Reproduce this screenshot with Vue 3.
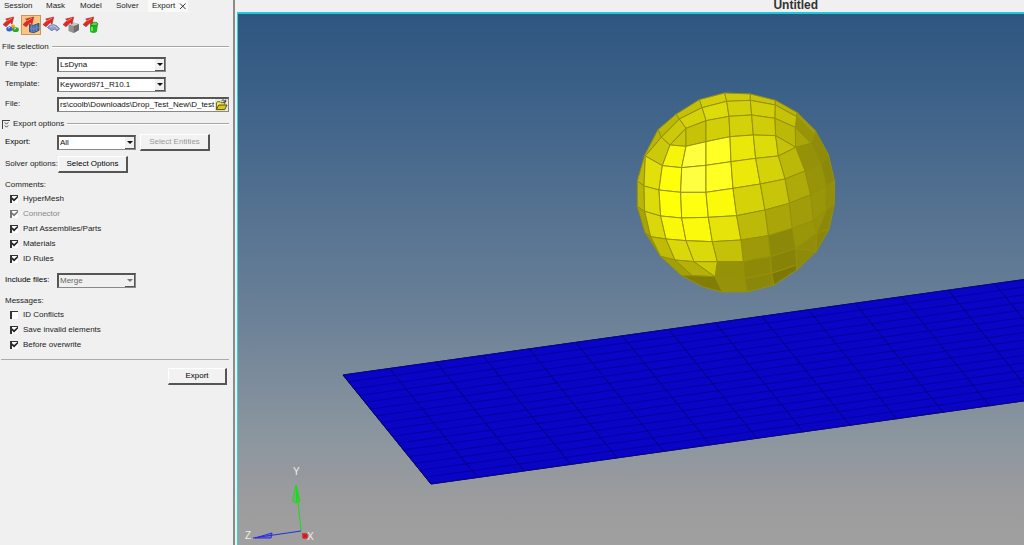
<script setup>
import { ref } from 'vue'

const tabs = ['Session', 'Mask', 'Model', 'Solver']
const tools = ['connectors', 'mesh', 'surface', 'solid', 'database']
const activeTool = ref('mesh')

const fileType = ref('LsDyna')
const template = ref('Keyword971_R10.1')
const filePath = ref('rs\\coolb\\Downloads\\Drop_Test_New\\D_test')
const exportScope = ref('All')
const include = ref('Merge')

const comments = ref([
  { id: 'hypermesh', label: 'HyperMesh', on: true },
  { id: 'connector', label: 'Connector', on: true, disabled: true },
  { id: 'parts', label: 'Part Assemblies/Parts', on: true },
  { id: 'materials', label: 'Materials', on: true },
  { id: 'rules', label: 'ID Rules', on: true }
])
const messages = ref([
  { id: 'conflicts', label: 'ID Conflicts', on: false },
  { id: 'invalid', label: 'Save invalid elements', on: true },
  { id: 'overwrite', label: 'Before overwrite', on: true }
])

// Shaded faces of the ball, three units to a pixel
const faces = [
  ['208,44 284,24 290,49 216,68', '#d2ce0a'],
  ['284,24 361,27 361,46 290,49', '#cfcb08'],
  ['361,27 436,46 436,60 361,46', '#c8c40c'],
  ['436,46 502,83 500,95 436,60', '#b8b40a'],
  ['502,83 556,137 555,150 500,95', '#a09c0a'],
  ['500,95 555,150 543,175 496,127', '#98940a'],
  ['138,88 208,44 216,68 148,102', '#c4c008'],
  ['216,68 290,49 297,94 228,107', '#dedb0a'],
  ['290,49 361,46 365,90 297,94', '#d4d00a'],
  ['361,46 436,60 435,100 365,90', '#d2ce0a'],
  ['436,60 500,95 496,127 435,100', '#c6c20a'],
  ['148,102 216,68 228,107 168,130', '#d6d20a'],
  ['84,134 138,88 148,102 94,157', '#bcb808'],
  ['94,157 148,102 168,130 120,180', '#ccc80a'],
  ['120,180 168,130 168,184', '#cac60a'],
  ['168,130 228,107 228,170 168,184', '#c6c208'],
  ['228,107 297,94 300,155 228,170', '#d2ce08'],
  ['297,94 365,90 370,150 300,155', '#d4d00a'],
  ['365,90 435,100 437,152 370,150', '#d0cc0a'],
  ['435,100 496,127 497,187 437,152', '#bcb80a'],
  ['496,127 543,175 497,187', '#aaa60a'],
  ['497,187 543,175 573,238 525,258', '#959108'],
  ['543,175 555,150 556,137 595,208 573,238', '#908c0a'],
  ['44,211 84,134 94,157 46,213', '#b8b408'],
  ['46,213 94,157 120,180 97,242', '#ccc80a'],
  ['120,180 168,184 155,248 97,242', '#f6f40a'],
  ['168,184 228,170 228,241 155,248', '#ffff40'],
  ['228,170 300,155 303,230 228,241', '#ffff26'],
  ['300,155 370,150 377,220 303,230', '#eae70a'],
  ['370,150 437,152 445,213 377,220', '#dedb0a'],
  ['437,152 497,187 445,213', '#c6c20a'],
  ['445,213 497,187 525,258 465,282', '#bcb80a'],
  ['573,238 595,208 614,290 588,303', '#8c880a'],
  ['22,288 44,211 46,213 42,303', '#bcb808'],
  ['46,213 97,242 87,315 42,303', '#e2df0a'],
  ['97,242 155,248 152,322 87,315', '#ffff0c'],
  ['155,248 228,241 228,322 152,322', '#ffff42'],
  ['228,241 303,230 309,310 228,322', '#ffff24'],
  ['303,230 377,220 391,297 309,310', '#ebe80a'],
  ['377,220 445,213 465,282 391,297', '#d6d20a'],
  ['465,282 525,258 542,329 478,355', '#aeaa0a'],
  ['525,258 573,238 588,303 542,329', '#98940a'],
  ['588,303 614,290 613,357 588,375', '#938f0a'],
  ['22,288 42,303 44,379 22,365', '#b8b408'],
  ['42,303 87,315 92,393 44,379', '#dedb0a'],
  ['87,315 152,322 155,399 92,393', '#ffff0a'],
  ['152,322 228,322 235,397 155,399', '#ffff12'],
  ['228,322 309,310 320,392 235,397', '#fafa0a'],
  ['309,310 391,297 405,375 320,392', '#d6d20a'],
  ['391,297 465,282 478,355 405,375', '#c8c40a'],
  ['405,375 478,355 487,430 415,452', '#aaa608'],
  ['478,355 542,329 550,407 487,430', '#a19d0a'],
  ['542,329 588,303 588,375 550,407', '#9a960a'],
  ['588,375 613,357 597,433 560,445', '#8c880a'],
  ['550,407 588,375 560,445', '#96920a'],
  ['22,365 44,379 62,455 45,442', '#a8a408'],
  ['44,379 92,393 108,462 62,455', '#dad70a'],
  ['92,393 155,399 168,467 108,462', '#f9f80a'],
  ['155,399 235,397 247,470 168,467', '#fcfa0c'],
  ['235,397 320,392 333,465 247,470', '#e6e30a'],
  ['320,392 405,375 415,452 333,465', '#bdb908'],
  ['333,465 415,452 422,515 340,530', '#9d9908'],
  ['415,452 487,430 497,490 422,515', '#8c8809'],
  ['487,430 550,407 560,445 497,490', '#9a960a'],
  ['497,490 560,445 558,500', '#918d0a'],
  ['45,442 62,455 92,514', '#969208'],
  ['62,455 108,462 135,525 92,514', '#bfbb08'],
  ['108,462 168,467 192,530 135,525', '#dad70a'],
  ['168,467 247,470 262,530 192,530', '#dcd90a'],
  ['247,470 333,465 340,530 262,530', '#c5c108'],
  ['262,530 340,530 343,581 255,575', '#969208'],
  ['340,530 422,515 425,565 343,581', '#8e8a08'],
  ['422,515 497,490 500,540 425,565', '#878309'],
  ['497,490 558,500 500,555 500,540', '#8e8a0a'],
  ['560,445 597,433 558,500', '#8a860a'],
  ['92,514 135,525 187,572 155,572', '#a39f08'],
  ['135,525 192,530 255,575 187,572', '#b5b108'],
  ['192,530 262,530 255,575', '#ccc80a'],
  ['155,572 187,572 255,575 277,621 220,606', '#817d06'],
  ['255,575 343,581 352,620 277,621', '#96920a'],
  ['343,581 425,565 432,600 352,620', '#8b870a'],
  ['425,565 500,540 500,555 432,600', '#7c7808']
]

const columns = Array.from({ length: 16 }, (_, i) => {
  const x = 343 + 46.6 * i
  const y = 375 - 6.47 * i
  return { x1: x, y1: y, x2: x + 88, y2: y + 109 }
})
const rows = Array.from({ length: 17 }, (_, i) => {
  const x = 343 + 5.5 * i
  const y = 375 + 6.81 * i
  return { x1: x, y1: y, x2: x + 745.6, y2: y - 104.5 }
})
</script>

<template>
  <div class="app">
    <aside class="panel">
      <nav class="tabs">
        <button v-for="t in tabs" :key="t" class="tab">{{ t }}</button>
        <button class="tab active">Export
          <svg class="close" viewBox="0 0 8 8" aria-hidden="true"><path d="M1 1.5L6.5 7M6.5 1.5L1 7" /></svg>
        </button>
      </nav>

      <div class="toolbar">
        <button
          v-for="t in tools" :key="t" class="tool" :class="{ on: activeTool === t }"
          :aria-label="t" @click="activeTool = t"
        >
          <svg viewBox="0 0 18 18" aria-hidden="true">
            <g v-if="t === 'connectors'">
              <path d="M7 11l5 3" stroke="#777" stroke-width="2" />
              <circle cx="11" cy="10.5" r="2.1" fill="#e6a51c" />
              <ellipse cx="7.3" cy="13" rx="3" ry="2.5" fill="#2b62d8" />
              <ellipse cx="13.6" cy="13.7" rx="3.3" ry="2.4" fill="#39a51f" />
              <path d="M6 12l2-.5M12 13l2-.5" stroke="#bfe0ff" stroke-width="1" />
            </g>
            <g v-else-if="t === 'mesh'">
              <path d="M7.500 8.500l4 .8 5.500-2v7l-5 2.400-4.500-.9z" fill="#4b6fae" stroke="#2c4270" stroke-width=".8" />
              <path d="M7.500 12l4.500 1 5-2M9.700 9v7M12 9.400v7.200M14.500 8.500V15" fill="none" stroke="#7f9dd0" stroke-width=".5" />
            </g>
            <g v-else-if="t === 'surface'">
              <path d="M5.500 11.500c3-4 9-3.800 12 1.600L14.600 15c-1.200-2.300-2.800-2.200-4.600-.2z" fill="#8f9fcf" stroke="#5b6898" stroke-width=".8" />
              <path d="M8 11c3-2 6-1 7.500 2" fill="none" stroke="#c3cdea" />
            </g>
            <g v-else-if="t === 'solid'">
              <path d="M6.500 8.500l5-2 5.500 1.600v6L11.500 17l-5-2z" fill="#929292" />
              <path d="M6.500 8.500l5-2 5.500 1.600-5 2z" fill="#c9c9c9" />
              <path d="M11.800 10.200L17 8.100v6L11.800 17z" fill="#6f6f6f" />
            </g>
            <g v-else>
              <path d="M8 8v7c0 2.500 7 2.500 7 0l1-7z" fill="#20b51e" />
              <ellipse cx="12" cy="8" rx="4" ry="1.800" fill="#58d54c" stroke="#157d13" stroke-width=".7" />
              <path d="M10 11v4" stroke="#94f184" stroke-width="1.400" />
            </g>
            <path d="M1 8.500l4.200-4L3.600 3l8.100-2-1.700 7.200-1.700-1.600-4.300 4.200z" fill="#e02a25" stroke="#9b1d19" stroke-width=".5" />
            <path d="M5 5l5-3" stroke="#ff7b70" stroke-width="1" />
          </svg>
        </button>
      </div>

      <h2 class="legend">File selection<i></i></h2>
      <div class="row">
        <label for="type">File type:</label>
        <span class="combo wide">
          <select id="type" v-model="fileType"><option>LsDyna</option></select><b class="arrow"></b>
        </span>
      </div>
      <div class="row">
        <label for="template">Template:</label>
        <span class="combo wide">
          <select id="template" v-model="template"><option>Keyword971_R10.1</option></select><b class="arrow"></b>
        </span>
      </div>
      <div class="row">
        <label for="file">File:</label>
        <span class="combo full">
          <input id="file" v-model="filePath" type="text">
          <button class="browse" aria-label="Browse">
            <svg viewBox="0 0 13 13" aria-hidden="true">
              <path d="M1 11.500V4l1-1h3l1 1h4v2" fill="#f4e86b" stroke="#5e5a0a" />
              <path d="M1 11.500L3.500 6.500H12.500L10 11.500z" fill="#d9c51c" stroke="#4d4906" />
              <path d="M6.500 2c1.500-1.500 3-1 4 .8M11 .8v2.500H8.500" fill="none" stroke="#222" />
            </svg>
          </button>
        </span>
      </div>

      <h2 class="legend options">
        <button class="fold" aria-label="Collapse export options">
          <svg viewBox="0 0 8 9" aria-hidden="true"><path d="M2 1.500l2 2 2-2M2 5l2 2 2-2" /></svg>
        </button>Export options<i></i>
      </h2>
      <div class="row scope">
        <label class="strong" for="scope">Export:</label>
        <span class="combo mid">
          <select id="scope" v-model="exportScope"><option>All</option></select><b class="arrow"></b>
        </span>
        <button class="push" disabled>Select Entities</button>
      </div>
      <div class="row">
        <span class="caption">Solver options:</span>
        <button class="push">Select Options</button>
      </div>

      <fieldset class="checks">
        <legend>Comments:</legend>
        <label v-for="c in comments" :key="c.id" :class="{ dim: c.disabled }" :for="c.id">
          <input :id="c.id" v-model="c.on" type="checkbox" :disabled="c.disabled">{{ c.label }}
        </label>
      </fieldset>
      <div class="row">
        <label class="strong" for="include">Include files:</label>
        <span class="combo mid off">
          <select id="include" v-model="include" disabled><option>Merge</option></select><b class="arrow"></b>
        </span>
      </div>
      <fieldset class="checks">
        <legend>Messages:</legend>
        <label v-for="m in messages" :key="m.id" :for="m.id">
          <input :id="m.id" v-model="m.on" type="checkbox">{{ m.label }}
        </label>
      </fieldset>
      <footer class="actions"><button class="push submit">Export</button></footer>
    </aside>

    <main class="view">
      <h1>Untitled</h1>
      <div class="canvas">
        <svg class="scene" viewBox="238 14 786 531" preserveAspectRatio="xMinYMin slice" role="img" aria-label="Ball above a plate">
          <g class="plate">
            <polygon points="343,375 1088.600,270.500 1176.600,379.500 431,484" />
            <line v-for="(l, i) in rows" :key="'r' + i" v-bind="l" class="across" />
            <line v-for="(l, i) in columns" :key="'c' + i" v-bind="l" />
          </g>
          <g class="ball" transform="translate(630 85) scale(.33333)">
            <polygon v-for="(f, i) in faces" :key="i" :points="f[0]" :fill="f[1]" />
          </g>
          <g class="triad">
            <path class="y" d="M301 531l-4.500-45M296 485l-3.500 16 3.500 2 4-2zM296.500 488v14" />
            <path class="z" d="M301 531l-48 7M255 538l17-5-1 5z" />
            <circle cx="305" cy="536" r="3" fill="#e02a2a" />
            <path d="M302 533l5 5M303 538l4-4" stroke="#a01818" stroke-width=".7" />
            <text x="293" y="475">Y</text>
            <text x="245" y="539">Z</text>
            <text x="307" y="540">X</text>
          </g>
        </svg>
      </div>
    </main>
  </div>
</template>

<style>
html, body { margin: 0; background: #f0f0f0; }
</style>

<style scoped>
* { box-sizing: border-box; }
.app {
  display: flex; min-height: 100vh; overflow: hidden;
  font: 8px/12px "Liberation Sans", Arial, sans-serif; color: #222;
}
button, input, select { font: inherit; color: inherit; margin: 0; padding: 0; border: 0; border-radius: 0; background: none; appearance: none; outline: 0; }
.panel { flex: 0 0 235px; padding-right: 4px; border-right: 2px solid #8b8b8b; background: #f0f0f0; }
.tabs { display: flex; height: 12px; width: max-content; }
.tab { width: 36px; padding-left: 4px; text-align: left; background: #f2f2f2; }
.tab:first-child { width: 42px; }
.tab:nth-child(2) { width: 34px; }
.tab.active { display: flex; gap: 4px; align-items: center; width: 40px; background: #fafafa; }
.close { flex: 0 0 8px; height: 8px; stroke: #333; fill: none; }
.toolbar { display: flex; height: 26px; padding: 3px 0 0 1px; }
.tool { display: grid; place-items: center; width: 20px; height: 20px; border: 1px solid transparent; }
.tool.on { background: #fcc583; border-color: #c9955c; }
.tool svg { width: 18px; height: 18px; fill: none; }
.legend { display: flex; align-items: center; gap: 3px; height: 18px; margin: 0 0 -2px; padding-left: 2px; font-size: 8px; font-weight: 400; }
.legend i { flex: 1; height: 2px; border-top: 1px solid #a5a5a5; border-bottom: 1px solid #fff; }
.legend.options { height: 20px; margin: 0; }
.fold { width: 8px; height: 9px; border-left: 1px solid #444; border-top: 1px solid #444; }
.fold svg { display: block; width: 7px; height: 8px; fill: none; stroke: #333; }
.row { display: flex; align-items: center; height: 20px; padding-left: 5px; }
.row > label, .caption { flex: 0 0 52px; white-space: nowrap; }
.strong { color: #000; }
.combo { display: flex; height: 15px; background: #fff; border: 1px solid #888; border-top: 2px solid #555; border-left: 2px solid #555; }
.wide { width: 109px; }
.mid { width: 79px; }
.full { flex: 1; }
.combo select, .combo input { flex: 1; min-width: 0; padding-left: 1px; color: #111; }
.arrow { display: grid; place-items: center; width: 10px; background: #f0f0f0; border-right: 1px solid #555; border-bottom: 1px solid #555; }
.arrow::after { content: ""; border: 3px solid transparent; border-top-color: #111; border-bottom: 0; }
.combo.off { background: #f0f0f0; }
.off select { color: #666; opacity: 1; }
.off .arrow::after { border-top-color: #777; }
.browse { width: 13px; background: #e9e9e0; }
.browse svg { display: block; width: 13px; height: 12px; }
.push {
  width: 70px; height: 17px; color: #000; background: #f2f2f2;
  border: 1px solid #fff; border-right: 2px solid #555; border-bottom: 2px solid #555;
}
.push:disabled { color: #999; }
.scope { height: 16px; margin-bottom: 4px; }
.scope .push { margin-left: 4px; }
.checks { display: flex; flex-direction: column; margin: 3px 0 4px; padding: 0; border: 0; }
.checks legend { height: 14px; padding: 0 5px; line-height: 16px; }
.checks label { display: flex; align-items: center; gap: 5px; height: 15px; padding-left: 10px; }
.checks input { width: 8px; height: 8px; background: #fff; border-top: 1px solid #333; border-left: 2px solid #333; }
.checks input:checked::before {
  content: ""; display: block; width: 6px; height: 6px; background: #222;
  clip-path: polygon(0 30%, 35% 60%, 100% 0, 100% 35%, 35% 100%, 0 65%);
}
.checks .dim { color: #888; }
.dim input { border-color: #777; }
.dim input:checked::before { background: #777; }
.actions { display: flex; justify-content: flex-end; margin: 7px 0 0 1px; padding: 8px 2px; border-top: 1px solid #aaa; }
.submit { width: 59px; }
.view { display: flex; flex: 1; flex-direction: column; min-width: 0; padding-left: 2px; background: #f0f0f0; }
h1 { height: 12px; margin: 0; padding-left: 42%; font: bold 12px/10px "Liberation Sans", Arial, sans-serif; text-align: center; color: #333; }
.canvas {
  position: relative; flex: 1; border-top: 2px solid #20c8dc; border-left: 1px solid #20d8e8;
  background: linear-gradient(#2e5680 0%, #3f638a 18%, #6a8097 56%, #8c969f 80%, #9c9c9e 92%, #a0a0a0);
}
.scene { position: absolute; inset: 0; width: 100%; height: 100%; }
.plate polygon { fill: #0a04c6; stroke: #111133; }
.plate line { stroke: #060474; stroke-width: 1; }
.plate .across { stroke: #0502a0; }
.ball polygon { stroke: #969208; stroke-width: 3; stroke-linejoin: round; }
.y { fill: rgba(24, 220, 24, .3); stroke: #18dc18; }
.z { fill: rgba(40, 40, 232, .3); stroke: #2828e8; }
.triad text { font: 10px "Liberation Sans", Arial, sans-serif; fill: #eee; }
</style>
